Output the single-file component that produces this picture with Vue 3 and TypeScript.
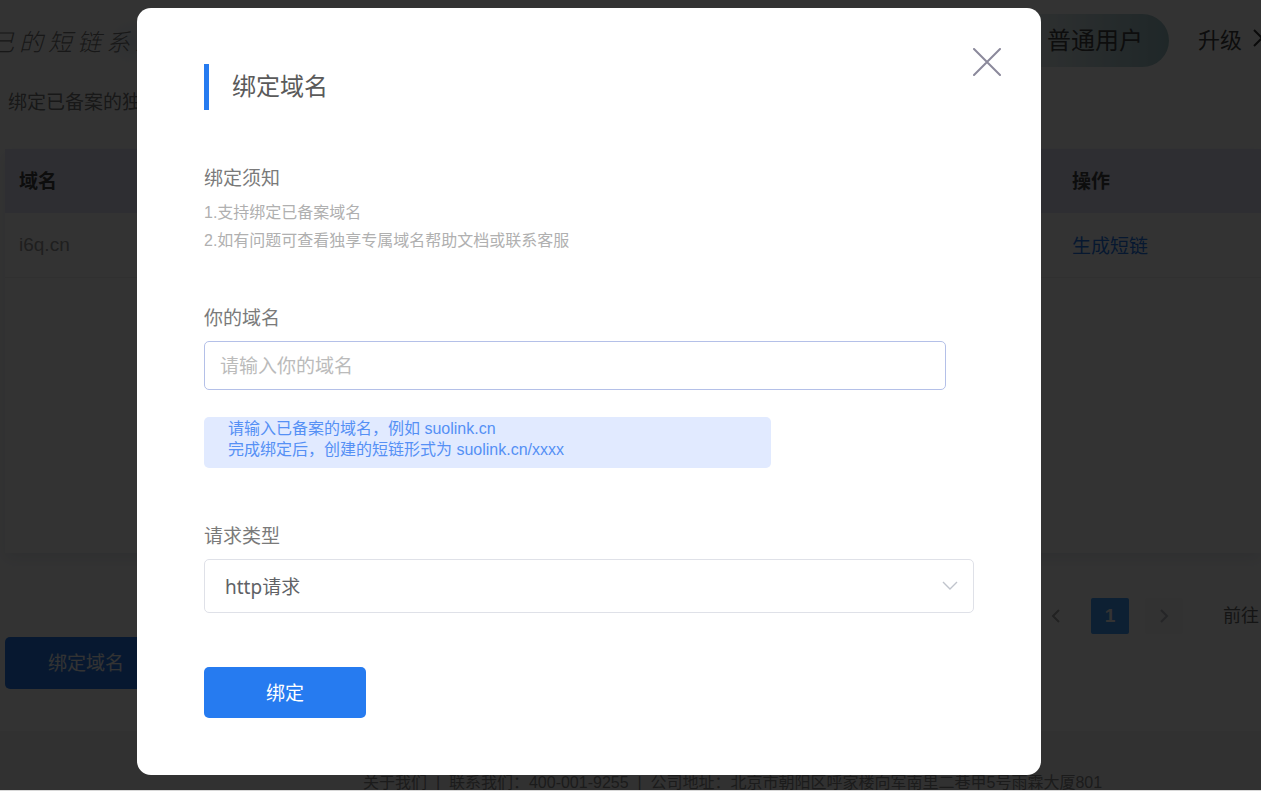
<script setup lang="ts">
import { ref } from 'vue'

interface DomainRow {
  domain: string
  action: string
}

const brand: string[] = [...'己的短链系统']
const rows: DomainRow[] = [{ domain: 'i6q.cn', action: '生成短链' }]
const notes: string[] = ['1.支持绑定已备案域名', '2.如有问题可查看独享专属域名帮助文档或联系客服']
const domain = ref('')
const protocol = ref('http')
const open = ref(true)
</script>

<template>
  <div class="page">
    <header class="header">
      <span class="logo"><span v-for="char in brand" :key="char">{{ char }}</span></span>
      <span class="badge">普通用户</span>
      <a class="upgrade" href="#">升级
        <svg class="more" viewBox="0 0 8 20" width="8" height="20" aria-hidden="true">
          <path d="M1 2 L9 10 L1 18" fill="none" stroke="#333" stroke-width="2" />
        </svg>
      </a>
    </header>

    <main class="main">
      <p class="intro">绑定已备案的独享域名</p>
      <section class="card">
        <table class="table">
          <thead>
            <tr>
              <th scope="col">域名</th>
              <th scope="col" class="ops">操作</th>
            </tr>
          </thead>
          <tbody>
            <tr v-for="row in rows" :key="row.domain">
              <td>{{ row.domain }}</td>
              <td><a href="#">{{ row.action }}</a></td>
            </tr>
          </tbody>
        </table>
      </section>
      <nav class="pager" aria-label="分页">
        <button type="button" class="step prev" aria-label="上一页">
          <svg viewBox="0 0 10 14" width="10" height="14"><path d="M8 1 L2 7 L8 13" fill="none" stroke="currentColor" stroke-width="2" /></svg>
        </button>
        <button type="button" class="step current">1</button>
        <button type="button" class="step next" aria-label="下一页">
          <svg viewBox="0 0 10 14" width="10" height="14"><path d="M2 1 L8 7 L2 13" fill="none" stroke="currentColor" stroke-width="2" /></svg>
        </button>
        <span class="jump">前往</span>
      </nav>
      <button type="button" class="add" @click="open = true">绑定域名</button>
    </main>

    <footer class="footer">关于我们&nbsp; |&nbsp; 联系我们：400-001-9255&nbsp; |&nbsp; 公司地址：北京市朝阳区呼家楼向军南里二巷甲5号雨霖大厦801</footer>
  </div>

  <div v-if="open" class="overlay">
    <form class="modal" role="dialog" aria-labelledby="dialog-title" @submit.prevent>
      <button type="button" class="close" aria-label="关闭" @click="open = false">
        <svg viewBox="0 0 28 28" width="28" height="28">
          <path d="M1 1 L27 27 M27 1 L1 27" fill="none" stroke="#8b899b" stroke-width="2" stroke-linecap="round" />
        </svg>
      </button>
      <h2 id="dialog-title" class="title">绑定域名</h2>

      <h3 class="label">绑定须知</h3>
      <div class="notes">
        <p v-for="note in notes" :key="note">{{ note }}</p>
      </div>

      <label class="label" for="domain">你的域名</label>
      <input id="domain" v-model="domain" class="field" type="text" placeholder="请输入你的域名">
      <div class="hint">
        <p>请输入已备案的域名，例如 suolink.cn</p>
        <p>完成绑定后，创建的短链形式为 suolink.cn/xxxx</p>
      </div>

      <label class="label" for="protocol">请求类型</label>
      <div class="picker">
        <select id="protocol" v-model="protocol">
          <option value="http">http请求</option>
          <option value="https">https请求</option>
        </select>
        <svg class="arrow" viewBox="0 0 16 10" width="16" height="10" aria-hidden="true">
          <path d="M1 1 L8 8 L15 1" fill="none" stroke="#c0c4cc" stroke-width="1.4" />
        </svg>
      </div>

      <button type="submit" class="submit">绑定</button>
    </form>
  </div>
</template>

<style>
body {
  margin: 0;
  background: #d8d8d8;
  font-family: "Liberation Sans", "Noto Sans CJK SC", sans-serif;
}
</style>

<style scoped>
* {
  box-sizing: border-box;
}
p,
h2,
h3 {
  margin: 0;
  font-weight: 400;
}
button,
input,
select {
  font-family: inherit;
}
a {
  text-decoration: none;
}
.page {
  display: flex;
  flex-direction: column;
  height: calc(100vh - 1px);
  overflow: hidden;
  background: #fff;
}
.header {
  display: flex;
  align-items: center;
  height: 80px;
  background: radial-gradient(circle at 132px 42px, #e4eef8 0, #fff 24px);
}
.logo {
  display: flex;
  gap: 5px;
  margin-left: -10px;
  font-size: 24px;
  font-style: italic;
  font-weight: 300;
  color: #777;
  white-space: nowrap;
}
.badge {
  margin-left: auto;
  padding: 0 26px 0 60px;
  font-size: 24px;
  line-height: 53px;
  color: #444;
  border-radius: 0 27px 27px 0;
  background: linear-gradient(90deg, #fff, #9cc2c8);
}
.upgrade {
  display: flex;
  align-items: center;
  gap: 11px;
  margin-left: 29px;
  padding-bottom: 4px;
  font-size: 22px;
  color: #444;
}
.main {
  flex: 1;
}
.intro {
  padding-left: 8px;
  font-size: 19px;
  line-height: 46px;
  color: #777;
}
.card {
  margin: 23px 0 0 5px;
  height: 404px;
  box-shadow: 0 6px 14px rgba(60, 80, 140, 0.12);
}
.table {
  width: 100%;
  table-layout: fixed;
  border-collapse: collapse;
  font-size: 19px;
  text-align: left;
}
.table th,
.table td {
  height: 64px;
  padding: 0 14px;
}
.table th {
  padding-bottom: 4px;
  background: #e4e7f8;
  color: #444;
}
.table td {
  border-bottom: 1px solid #eee;
  color: #999;
}
.table .ops {
  width: 203px;
}
.table a {
  color: #267bf0;
}
.pager {
  display: flex;
  align-items: center;
  justify-content: flex-end;
  gap: 16px;
  margin-top: 45px;
  padding-right: 2px;
}
.step {
  display: flex;
  align-items: center;
  justify-content: center;
  width: 38px;
  height: 36px;
  padding: 0;
  border: 0;
  border-radius: 2px;
  font-size: 19px;
  font-weight: 700;
  background: #f7f7f8;
  color: #b8bbc2;
}
.prev {
  background: #fff;
  color: #a8a8a8;
}
.current {
  background: #409eff;
  color: #fff;
}
.jump {
  margin-left: 24px;
  font-size: 18px;
  line-height: 36px;
  color: #666;
}
.add {
  display: block;
  width: 162px;
  height: 52px;
  margin: 3px 0 0 5px;
  padding-bottom: 4px;
  border: 0;
  border-radius: 5px;
  font-size: 19px;
  background: #267bf0;
  color: #fff;
}
.footer {
  height: 59px;
  padding: 40px 0 0 363px;
  font-size: 16px;
  line-height: 24px;
  background: #f5f5f5;
  color: #888;
  white-space: nowrap;
}
.overlay {
  position: fixed;
  inset: 0 0 1px;
  overflow: hidden;
  background: rgba(0, 0, 0, 0.8);
}
.modal {
  position: relative;
  margin: 8px 220px 15px 137px;
  padding: 56px 67px 57px;
  border-radius: 14px;
  background: #fff;
}
.close {
  position: absolute;
  top: 40px;
  right: 40px;
  display: flex;
  padding: 0;
  border: 0;
  background: none;
}
.title {
  margin-bottom: 53px;
  padding-left: 23px;
  border-left: 5px solid #267bf0;
  font-size: 24px;
  line-height: 46px;
  color: #5a5a5a;
}
.label {
  display: block;
  font-size: 19px;
  line-height: 32px;
  color: #7a7a7a;
}
.notes {
  margin: 4px 0 48px;
  font-size: 16px;
  line-height: 28px;
  color: #b0b0b0;
}
.field {
  display: block;
  width: calc(100% - 28px);
  height: 49px;
  margin-top: 6px;
  padding: 2px 15px 0;
  border: 1px solid #b4c0e8;
  border-radius: 5px;
  font-size: 19px;
  outline: 0;
}
.field::placeholder {
  color: #bbb;
}
.hint {
  max-width: 567px;
  margin: 27px 0 53px;
  padding: 1px 24px 8px;
  border-radius: 5px;
  font-size: 16px;
  line-height: 21px;
  background: #e1eaff;
  color: #5590f5;
}
.picker {
  position: relative;
  margin-top: 6px;
}
.picker select {
  display: block;
  width: 100%;
  height: 54px;
  padding: 2px 20px 0;
  appearance: none;
  border: 1px solid #dfe1e8;
  border-radius: 5px;
  font-family: "Noto Sans", "Noto Sans CJK SC", sans-serif;
  font-size: 19px;
  background: #fff;
  color: #606266;
}
.arrow {
  position: absolute;
  top: 22px;
  right: 16px;
  pointer-events: none;
}
.submit {
  display: block;
  width: 162px;
  height: 51px;
  margin-top: 54px;
  padding-bottom: 4px;
  border: 0;
  border-radius: 5px;
  font-size: 19px;
  background: #267bf0;
  color: #fff;
}
</style>
